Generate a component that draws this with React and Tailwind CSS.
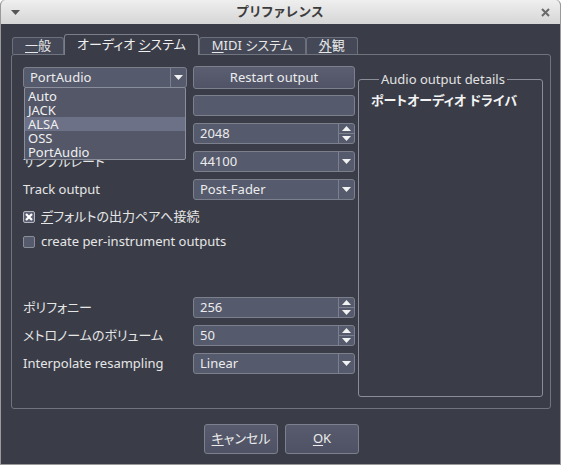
import React from 'react';

const font = { fontFamily: '"Noto Sans", "Noto Sans CJK JP", sans-serif' };

const DownArrow = () => (
  <svg width="9" height="5" viewBox="0 0 9 5">
    <path d="M0 0h9L4.5 5z" fill="#f2f2f2" />
  </svg>
);

const UpArrow = () => (
  <svg width="9" height="5" viewBox="0 0 9 5">
    <path d="M0 5h9L4.5 0z" fill="#f2f2f2" />
  </svg>
);

const Combo = ({ value, className = 'w-[162px]' }) => (
  <div className={`${className} h-[21px] flex items-stretch rounded-[3px] border border-[#7c808c] bg-[#555a6c] text-[13px] text-[#ececec]`}>
    <div className="flex-1 flex items-center pl-[6px] leading-none">{value}</div>
    <div className="w-[16px] border-l border-[#7c808c] flex items-center justify-center">
      <DownArrow />
    </div>
  </div>
);

const Spin = ({ value }) => (
  <div className="w-[162px] h-[21px] flex items-stretch rounded-[3px] border border-[#7c808c] bg-[#555a6c] text-[13px] text-[#ececec]">
    <div className="flex-1 flex items-center pl-[6px] leading-none">{value}</div>
    <div className="w-[16px] border-l border-[#7c808c] flex flex-col">
      <div className="flex-1 flex items-center justify-center border-b border-[#7c808c]">
        <UpArrow />
      </div>
      <div className="flex-1 flex items-center justify-center">
        <DownArrow />
      </div>
    </div>
  </div>
);

const Row = ({ label, children }) => (
  <div className="h-[21px] flex items-center justify-between">
    <span className="text-[13px] text-[#e6e6e6] whitespace-nowrap">{label}</span>
    {children}
  </div>
);

const Tab = ({ children, active }) =>
  active ? (
    <div className="h-[21px] -mb-px px-[12px] flex items-center rounded-t-[3px] border border-b-0 border-[#7a7e8a] bg-[#3a3d48] text-[13px] text-[#f0f0f0] relative z-10">
      {children}
    </div>
  ) : (
    <div className="h-[17px] px-[12px] flex items-center rounded-t-[3px] border border-b-0 border-[#6c707c] bg-[#444857] text-[13px] text-[#e8e8e8]">
      {children}
    </div>
  );

const U = ({ children }) => <span className="underline underline-offset-2">{children}</span>;

export default function App() {
  return (
    <div
      className="w-[561px] h-[465px] flex flex-col bg-[#3a3d48] border-x border-b border-[#9a9a9a] rounded-t-[5px] overflow-hidden [font-feature-settings:'palt']"
      style={font}
    >
      {/* title bar */}
      <div className="h-[24px] shrink-0 relative flex items-center justify-center bg-gradient-to-b from-[#efefef] to-[#d6d6d6]">
        <svg className="absolute left-[10px] top-[10px]" width="9" height="5" viewBox="0 0 9 5">
          <path d="M0 0h9L4.5 5z" fill="#555" />
        </svg>
        <span className="text-[13px] font-bold text-[#3c3c3c] tracking-[1px]">プリファレンス</span>
        <svg className="absolute right-[10px] top-[8px]" width="9" height="9" viewBox="0 0 9 9">
          <path d="M1 1l7 7M8 1L1 8" stroke="#6a6a6a" strokeWidth="2" />
        </svg>
      </div>

      <div className="pt-[10px] pl-[10px]">
        {/* tabs */}
        <div className="h-[20px] flex items-end pl-[1px]">
          <Tab>
            <U>一</U>般
          </Tab>
          <Tab active>
            オーディオ&nbsp;<U>シ</U>ステム
          </Tab>
          <Tab>
            <U>M</U>IDI システム
          </Tab>
          <Tab>
            <U>外</U>観
          </Tab>
        </div>

        {/* panel */}
        <div className="w-[540px] h-[355px] border border-[#70747f] rounded-[3px] pt-[12px] pl-[11px] flex">
          <div className="w-[332px] flex flex-col">
            <div className="h-[21px] flex items-center justify-between relative z-20">
              <div className="relative">
                <Combo value="PortAudio" className="w-[164px]" />
                {/* open driver list */}
                <div className="absolute left-[1px] top-[20px] w-[162px] h-[73px] pt-[1px] border border-[#8a8e9a] rounded-[2px] bg-[#535768] text-[13px] text-[#f0f0f0]">
                  {['Auto', 'JACK', 'ALSA', 'OSS', 'PortAudio'].map((it) => (
                    <div
                      key={it}
                      className={`h-[14px] leading-[14px] pl-[3px] ${it === 'ALSA' ? 'bg-[#6d7187]' : ''}`}
                    >
                      {it}
                    </div>
                  ))}
                </div>
              </div>
              <button className="w-[162px] h-[23px] rounded-[3px] border border-[#7c808c] bg-gradient-to-b from-[#5a5e70] to-[#505466] text-[13px] text-[#ececec]">
                Restart output
              </button>
            </div>

            <div className="mt-[7px] flex flex-col gap-[7px]">
              <Row label="">
                <div className="w-[162px] h-[21px] rounded-[3px] border border-[#7c808c] bg-[#555a6c]" />
              </Row>
              <Row label="">
                <Spin value="2048" />
              </Row>
              <Row label="サンプルレート">
                <Combo value="44100" />
              </Row>
              <Row label="Track output">
                <Combo value="Post-Fader" />
              </Row>
            </div>

            <div className="mt-[6px] h-[21px] flex items-center gap-[6px]">
              <div className="w-[12px] h-[12px] flex items-center justify-center rounded-[2px] border border-[#b4b7c0] bg-[#5d6173]">
                <svg width="8" height="8" viewBox="0 0 8 8">
                  <path d="M1 1l6 6M7 1L1 7" stroke="#ffffff" strokeWidth="2.2" />
                </svg>
              </div>
              <span className="text-[13px] text-[#e6e6e6]">
                <U>デ</U>フォルトの出力ペアへ接続
              </span>
            </div>
            <div className="mt-[4px] h-[21px] flex items-center gap-[6px]">
              <div className="w-[12px] h-[12px] rounded-[2px] border border-[#8a8e9a] bg-[#555a6c]" />
              <span className="text-[13px] text-[#e6e6e6]">create per-instrument outputs</span>
            </div>

            <div className="mt-[45px] flex flex-col gap-[7px]">
              <Row label="ポリフォニー">
                <Spin value="256" />
              </Row>
              <Row label="メトロノームのボリューム">
                <Spin value="50" />
              </Row>
              <Row label="Interpolate resampling">
                <Combo value="Linear" />
              </Row>
            </div>
          </div>

          <fieldset className="ml-[3px] mt-[5px] w-[185px] h-[325px] border border-[#8a8e98] rounded-[3px] px-[12px]">
            <legend className="ml-[8px] px-[2px] text-[13px] leading-[15px] text-[#e2e2e2]">
              Audio output details
            </legend>
            <div className="mt-[4px] text-[13px] font-bold text-[#f4f4f4]">ポートオーディオ ドライバ</div>
          </fieldset>
        </div>
      </div>

      {/* buttons */}
      <div className="mt-[15px] flex justify-center gap-[7px] pl-[2px]">
        <button className="w-[74px] h-[30px] rounded-[3px] border border-[#7c808c] bg-gradient-to-b from-[#575b6d] to-[#4e5264] text-[13px] text-[#ececec]">
          <U>キ</U>ャンセル
        </button>
        <button className="w-[74px] h-[30px] rounded-[3px] border border-[#7c808c] bg-gradient-to-b from-[#575b6d] to-[#4e5264] text-[13px] text-[#ececec]">
          <U>O</U>K
        </button>
      </div>
    </div>
  );
}
